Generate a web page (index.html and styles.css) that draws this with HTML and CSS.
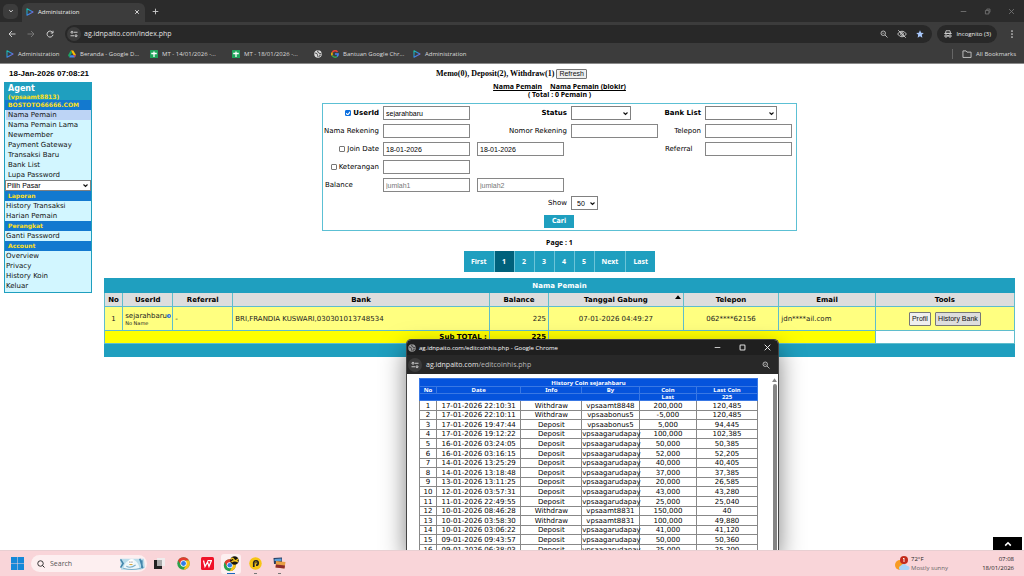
FILE: index.html
```html
<!DOCTYPE html>
<html lang="id">
<head>
<meta charset="utf-8">
<title>Administration</title>
<link rel="stylesheet" href="styles.css">
</head>
<body>
<svg class="defs" aria-hidden="true">
  <linearGradient id="playgrad" x1="0" y1="0" x2="1" y2="1"><stop offset="0" stop-color="#18c8a8"/><stop offset=".45" stop-color="#2a8be0"/><stop offset="1" stop-color="#b05ad8"/></linearGradient>
  <symbol id="play" viewBox="0 0 16 16"><path d="M2 14.500V1.500L14 8Z" fill="none" stroke="url(#playgrad)" stroke-width="2.200" stroke-linejoin="round"/></symbol>
  <symbol id="sheet" viewBox="0 0 16 16"><rect width="16" height="16" rx="1" fill="#1fa45b"/><path d="M8 3v11M2.500 7h11" stroke="#fff" stroke-width="2.600"/></symbol>
  <symbol id="tune" viewBox="0 0 16 16"><g fill="none" stroke="currentColor" stroke-width="1.800"><circle cx="4" cy="4.500" r="2"/><path d="M8 4.500h7M1 11.500h7"/><circle cx="12" cy="11.500" r="2"/></g></symbol>
  <symbol id="globe" viewBox="0 0 16 16"><circle cx="8" cy="8" r="7.500" fill="currentColor"/><path d="M2 6l4 1 1 3 1 4M8 1l-1 3 3 1 1 3 4-2M10 14l1-3 3-1" fill="none" stroke="#333" stroke-width="1.600"/></symbol>
  <symbol id="glass" viewBox="0 0 16 16"><g fill="none" stroke="currentColor" stroke-width="1.700"><circle cx="6.500" cy="6.500" r="4.500"/><path d="M10 10l5 5"/><path d="M4.500 6.500h4" stroke-width="1.300"/></g></symbol>
  <symbol id="chrome" viewBox="0 0 24 24"><circle cx="12" cy="12" r="11.500" fill="#2ba24c"/><path d="M12 .5A11.500 11.500 0 0 1 22 6.250H12L7 14.500 2 6.250A11.500 11.500 0 0 1 12 .5Z" fill="#e33b2e"/><path d="M22 6.250A11.500 11.500 0 0 1 12 23.500L17 14.500 16.500 6.250Z" fill="#fbc116"/><circle cx="12" cy="12" r="5.800" fill="#fff"/><circle cx="12" cy="12" r="4.500" fill="#2f7de9"/></symbol>
</svg>

<header class="browser">
  <div class="tabs">
    <button class="tab-search" aria-label="Cari tab"><svg viewBox="0 0 10 10"><path d="M2 3.500l3 3 3-3" fill="none" stroke="#ddd" stroke-width="1.600"/></svg></button>
    <div class="tab"><svg class="i8"><use href="#play"/></svg><span>Administration</span><button aria-label="Tutup tab"><svg viewBox="0 0 10 10"><path d="M2 2l6 6M8 2l-6 6" stroke="#ddd" stroke-width="1.600"/></svg></button></div>
    <button class="new-tab" aria-label="Tab baru"><svg viewBox="0 0 10 10"><path d="M5 1v8M1 5h8" stroke="#ccc" stroke-width="1.300"/></svg></button>
    <div class="window-controls">
      <button aria-label="Minimalkan"><svg viewBox="0 0 10 10"><path d="M1 5h8" stroke="#777" stroke-width="1.200"/></svg></button>
      <button aria-label="Pulihkan"><svg viewBox="0 0 10 10"><path d="M2 3.500h5v5H2zM4 3V1.500h4.500V6H7" fill="none" stroke="#777" stroke-width="1.200"/></svg></button>
      <button aria-label="Tutup"><svg viewBox="0 0 10 10"><path d="M1.500 1.500l7 7M8.500 1.500l-7 7" stroke="#777" stroke-width="1.200"/></svg></button>
    </div>
  </div>
  <div class="toolbar">
    <button aria-label="Kembali"><svg class="i8" viewBox="0 0 16 16"><path d="M15 8H2M8 2L2 8l6 6" fill="none" stroke="#d8d8d8" stroke-width="1.800"/></svg></button>
    <button aria-label="Maju"><svg class="i8" viewBox="0 0 16 16"><path d="M1 8h13M8 2l6 6-6 6" fill="none" stroke="#7c7c7c" stroke-width="1.800"/></svg></button>
    <button aria-label="Muat ulang"><svg class="i8" viewBox="0 0 16 16"><path d="M13.500 5.500A6 6 0 1 0 14 9.500M14 1.500V6H9.500" fill="none" stroke="#d8d8d8" stroke-width="1.900"/></svg></button>
    <div class="address">
      <span class="site-info"><svg class="i8"><use href="#tune"/></svg></span>
      <input class="url" aria-label="Alamat" value="ag.idnpaito.com/index.php">
      <svg class="i8"><use href="#glass"/></svg>
      <svg class="i10" viewBox="0 0 16 16"><g fill="none" stroke="#ccc" stroke-width="1.500"><path d="M1 8q3-4.500 7-4.500T15 8q-3 4.500-7 4.500T1 8Z"/><circle cx="8" cy="8" r="2.200"/><path d="M2 2l12 12"/></g></svg>
      <svg class="i8" viewBox="0 0 16 16"><path d="M8 .5l2.300 5 5.200.6-3.900 3.600 1.100 5.600L8 12.500l-4.700 2.800 1.100-5.600L.5 6.100l5.200-.6Z" fill="#a8c7fa"/></svg>
    </div>
    <button class="incognito"><svg class="i8" viewBox="0 0 16 16"><path d="M4 1.500h8l1 5H3ZM.5 7h15" fill="none" stroke="#ddd" stroke-width="1.600"/><g fill="none" stroke="#ddd" stroke-width="1.800"><circle cx="4" cy="12" r="2.400"/><circle cx="12" cy="12" r="2.400"/><path d="M6 11.500h4"/></g></svg>Incognito (3)</button>
    <button aria-label="Menu"><svg class="i8" viewBox="0 0 16 16" fill="#d8d8d8"><circle cx="8" cy="2" r="1.700"/><circle cx="8" cy="8" r="1.700"/><circle cx="8" cy="14" r="1.700"/></svg></button>
  </div>
  <nav class="bookmarks">
    <a href="#" class="bm-a"><svg class="i8"><use href="#play"/></svg>Administration</a>
    <a href="#" class="bm-b"><svg class="i8" viewBox="0 0 16 16"><path d="M5.500 1h5L16 10h-5Z" fill="#fbbc04"/><path d="M5.500 1L8 5.500 2.700 15 0 10.500Z" fill="#1ea362"/><path d="M5 10.500h11L13.300 15H2.700Z" fill="#4285f4"/><path d="M11 10.500h5L13.300 15Z" fill="#ea4335"/></svg>Beranda - Google D...</a>
    <a href="#" class="bm-c"><svg class="i8"><use href="#sheet"/></svg>MT - 14/01/2026 -...</a>
    <a href="#" class="bm-c"><svg class="i8"><use href="#sheet"/></svg>MT - 18/01/2026 -...</a>
    <a href="#" class="bm-d" aria-label="Situs"><svg class="i8"><use href="#globe"/></svg></a>
    <a href="#" class="bm-c"><svg class="i8" viewBox="0 0 16 16" fill="none" stroke-width="3"><path d="M13 4A6.300 6.300 0 0 0 2.500 5" stroke="#ea4335"/><path d="M2.500 5a6.300 6.300 0 0 0 0 6" stroke="#fbbc04"/><path d="M2.500 11a6.300 6.300 0 0 0 9.500 2" stroke="#34a853"/><path d="M12 13a6.300 6.300 0 0 0 2.300-5H8" stroke="#4285f4"/></svg>Bantuan Google Chr...</a>
    <a href="#"><svg class="i8"><use href="#play"/></svg>Administration</a>
    <a href="#" class="all"><svg class="i10" viewBox="0 0 16 16"><path d="M1.500 3h5l1.500 2h6.500v8.500h-13Z" fill="none" stroke="#ccc" stroke-width="1.400"/></svg>All Bookmarks</a>
  </nav>
</header>

<main class="page">
  <aside>
    <p class="clock">18-Jan-2026 07:08:21</p>
    <nav class="side">
      <div class="agent"><strong>Agent</strong><span>(vpsaamt8813)</span></div>
      <h2>BOSTOTO66666.COM</h2>
      <ul class="inset">
        <li class="current"><a href="#">Nama Pemain</a></li>
        <li><a href="#">Nama Pemain Lama</a></li>
        <li><a href="#">Newmember</a></li>
        <li><a href="#">Payment Gateway</a></li>
        <li><a href="#">Transaksi Baru</a></li>
        <li><a href="#">Bank List</a></li>
        <li><a href="#">Lupa Password</a></li>
      </ul>
      <select class="market" aria-label="Pilih Pasar"><option>Pilih Pasar</option></select>
      <h2>Laporan</h2>
      <ul><li><a href="#">History Transaksi</a></li><li><a href="#">Harian Pemain</a></li></ul>
      <h2>Perangkat</h2>
      <ul><li><a href="#">Ganti Password</a></li></ul>
      <h2>Account</h2>
      <ul><li><a href="#">Overview</a></li><li><a href="#">Privacy</a></li><li><a href="#">History Koin</a></li><li><a href="#">Keluar</a></li></ul>
    </nav>
  </aside>

  <section class="content">
    <div class="memo">Memo(0), Deposit(2), Withdraw(1) <button class="grey">Refresh</button></div>
    <div class="heads"><a href="#">Nama Pemain</a><a href="#">Nama Pemain (blokir)</a></div>
    <div class="total">( Total : 0 Pemain )</div>

    <form class="filter">
      <div class="lab bold"><input type="checkbox" id="cu" checked aria-label="Filter UserId"><label for="u">UserId</label></div>
      <input id="u" type="text" value="sejarahbaru">
      <label class="lab bold" for="st">Status</label>
      <select id="st" class="w-status"><option></option></select>
      <label class="lab bold" for="bl">Bank List</label>
      <select id="bl" class="w-bank"><option></option></select>

      <label class="lab" for="nr">Nama Rekening</label>
      <input id="nr" type="text">
      <label class="lab" for="no">Nomor Rekening</label>
      <input id="no" type="text">
      <label class="lab" for="te">Telepon</label>
      <input id="te" type="text">

      <div class="lab"><input type="checkbox" id="cj" aria-label="Filter Join Date"><label for="jd">Join Date</label></div>
      <input id="jd" type="text" value="18-01-2026">
      <input type="text" value="18-01-2026" aria-label="Sampai tanggal">
      <label class="lab start ref" for="re">Referral</label>
      <input id="re" type="text">

      <div class="lab"><input type="checkbox" id="ck" aria-label="Filter Keterangan"><label for="ke">Keterangan</label></div>
      <input id="ke" type="text">

      <label class="lab start first" for="j1">Balance</label>
      <input id="j1" type="text" placeholder="jumlah1">
      <input type="text" placeholder="jumlah2" aria-label="Balance sampai">

      <label class="lab third" for="sh">Show</label>
      <select id="sh" class="w-show"><option>50</option></select>
      <button class="search" type="button">Cari</button>
    </form>

    <p class="page-no">Page : 1</p>
    <nav class="pager"><a href="#">First</a><a href="#" class="on">1</a><a href="#">2</a><a href="#">3</a><a href="#">4</a><a href="#">5</a><a href="#">Next</a><a href="#">Last</a></nav>

    <table class="players">
      <colgroup><col class="p1"><col class="p2"><col class="p3"><col class="p4"><col class="p5"><col class="p6"><col class="p7"><col class="p8"><col class="p9"></colgroup>
      <thead>
        <tr class="title"><th colspan="9">Nama Pemain</th></tr>
        <tr class="cols"><th>No</th><th>UserId</th><th>Referral</th><th>Bank</th><th>Balance</th><th class="sorted">Tanggal Gabung<svg viewBox="0 0 8 6"><path d="M4 0l4 5H0Z"/></svg></th><th>Telepon</th><th>Email</th><th>Tools</th></tr>
      </thead>
      <tbody>
        <tr class="row"><td class="c">1</td><td><div class="user">sejarahbaru<svg viewBox="0 0 10 10"><circle cx="5" cy="5" r="5" fill="#2468d8"/><path d="M2.500 5h5M5.500 3l2 2-2 2" fill="none" stroke="#fff" stroke-width="1.300"/></svg></div><small>No Name</small></td><td>-</td><td>BRI,FRANDIA KUSWARI,030301013748534</td><td class="r">225</td><td class="c">07-01-2026 04:49:27</td><td class="c">062****62156</td><td>jdn****ail.com</td><td class="c"><button class="grey">Profil</button> <button class="grey dark">History Bank</button></td></tr>
        <tr class="sub"><td colspan="4" class="r">Sub TOTAL :</td><td class="r">225</td><td colspan="3"></td><td class="blank"></td></tr>
        <tr class="foot"><td colspan="9"></td></tr>
      </tbody>
    </table>
  </section>

  <section class="popup" aria-label="History Coin">
    <div class="pop-title"><svg class="i8"><use href="#globe"/></svg><span>ag.idnpaito.com/editcoinhis.php - Google Chrome</span>
      <div class="pop-controls">
        <button aria-label="Minimalkan"><svg viewBox="0 0 10 10"><path d="M1 5h8" stroke="#ccc" stroke-width="1.400"/></svg></button>
        <button aria-label="Maksimalkan"><svg viewBox="0 0 10 10"><rect x="1.500" y="1.500" width="7" height="7" rx="1" fill="none" stroke="#ddd" stroke-width="1.500"/></svg></button>
        <button aria-label="Tutup"><svg viewBox="0 0 10 10"><path d="M1 1l8 8M9 1L1 9" stroke="#eee" stroke-width="1.400"/></svg></button>
      </div>
    </div>
    <div class="pop-url"><span class="site-info"><svg class="i8"><use href="#tune"/></svg></span><span class="addr">ag.idnpaito.com<i>/editcoinhis.php</i></span><svg class="i8"><use href="#glass"/></svg></div>
    <div class="pop-body">
      <table class="coins">
        <colgroup><col class="h1"><col class="h2"><col class="h3"><col class="h4"><col class="h5"><col class="h6"></colgroup>
        <thead>
          <tr><th colspan="6">History Coin sejarahbaru</th></tr>
          <tr><th>No</th><th>Date</th><th>Info</th><th>By</th><th>Coin</th><th>Last Coin</th></tr>
          <tr><th colspan="4"></th><th>Last</th><th>225</th></tr>
        </thead>
        <tbody>
          <tr><td>1</td><td>17-01-2026 22:10:31</td><td>Withdraw</td><td>vpsaamt8848</td><td>200,000</td><td>120,485</td></tr>
          <tr><td>2</td><td>17-01-2026 22:10:11</td><td>Withdraw</td><td>vpsaabonus5</td><td>-5,000</td><td>120,485</td></tr>
          <tr><td>3</td><td>17-01-2026 19:47:44</td><td>Deposit</td><td>vpsaabonus5</td><td>5,000</td><td>94,445</td></tr>
          <tr><td>4</td><td>17-01-2026 19:12:22</td><td>Deposit</td><td>vpsaagarudapay</td><td>100,000</td><td>102,385</td></tr>
          <tr><td>5</td><td>16-01-2026 03:24:05</td><td>Deposit</td><td>vpsaagarudapay</td><td>50,000</td><td>50,385</td></tr>
          <tr><td>6</td><td>16-01-2026 03:16:15</td><td>Deposit</td><td>vpsaagarudapay</td><td>52,000</td><td>52,205</td></tr>
          <tr><td>7</td><td>14-01-2026 13:25:29</td><td>Deposit</td><td>vpsaagarudapay</td><td>40,000</td><td>40,405</td></tr>
          <tr><td>8</td><td>14-01-2026 13:18:48</td><td>Deposit</td><td>vpsaagarudapay</td><td>37,000</td><td>37,385</td></tr>
          <tr><td>9</td><td>13-01-2026 13:11:25</td><td>Deposit</td><td>vpsaagarudapay</td><td>20,000</td><td>26,585</td></tr>
          <tr><td>10</td><td>12-01-2026 03:57:31</td><td>Deposit</td><td>vpsaagarudapay</td><td>43,000</td><td>43,280</td></tr>
          <tr><td>11</td><td>11-01-2026 22:49:55</td><td>Deposit</td><td>vpsaagarudapay</td><td>25,000</td><td>25,040</td></tr>
          <tr><td>12</td><td>10-01-2026 08:46:28</td><td>Withdraw</td><td>vpsaamt8831</td><td>150,000</td><td>40</td></tr>
          <tr><td>13</td><td>10-01-2026 03:58:30</td><td>Withdraw</td><td>vpsaamt8831</td><td>100,000</td><td>49,880</td></tr>
          <tr><td>14</td><td>10-01-2026 03:06:22</td><td>Deposit</td><td>vpsaagarudapay</td><td>41,000</td><td>41,120</td></tr>
          <tr><td>15</td><td>09-01-2026 09:43:57</td><td>Deposit</td><td>vpsaagarudapay</td><td>50,000</td><td>50,360</td></tr>
          <tr><td>16</td><td>09-01-2026 06:38:03</td><td>Deposit</td><td>vpsaagarudapay</td><td>25,000</td><td>25,200</td></tr>
        </tbody>
      </table>
      <div class="scroll"><svg viewBox="0 0 8 6"><path d="M4 0l4 6H0Z" fill="#858585"/></svg><span></span></div>
    </div>
  </section>
  <button class="to-top" aria-label="Ke atas"><svg viewBox="0 0 10 10"><path d="M1.500 7L5 3.500 8.500 7" fill="none" stroke="#fff" stroke-width="2"/></svg></button>
</main>

<footer class="taskbar">
  <button aria-label="Start"><svg class="i13" viewBox="0 0 26 26"><path d="M0 0h12.500v12.500H0zM13.500 0H26v12.500H13.500zM0 13.500h12.500V26H0zM13.500 13.500H26V26H13.500z" fill="#1688d8"/></svg></button>
  <div class="find"><svg class="i8" viewBox="0 0 16 16"><circle cx="7" cy="7" r="5.500" fill="none" stroke="#222" stroke-width="1.800"/><path d="M11 11l4 4" stroke="#222" stroke-width="2"/></svg><input type="text" placeholder="Search" aria-label="Search">
    <svg class="bear" viewBox="0 0 52 26"><path d="M2 3h46l2 17-8 4H4Z" fill="#b9dcea"/><path d="M3 4l5 8-5 8M40 3l6 18M44 6v15" stroke="#4386ac" stroke-width="3" fill="none"/><path d="M8 22q3-14 13-16 5-6 9 0 8 5 10 17-15 4-32-1Z" fill="#eef7fa"/><circle cx="23" cy="9" r="5" fill="#fff"/><circle cx="21" cy="9" r="1" fill="#345"/><circle cx="25" cy="9" r="1" fill="#345"/><path d="M14 17q8 5 18-2M8 21q16 5 34 0" stroke="#7aaec9" stroke-width="2" fill="none"/><path d="M20 14h6" stroke="#e0a93c" stroke-width="2"/></svg></div>
  <div class="apps">
    <button aria-label="Tampilan tugas"><svg class="i13" viewBox="0 0 26 26"><path d="M2 6h16v18H2z" fill="#222"/><path d="M8 2h16v16H8z" fill="#eee" opacity=".9"/><path d="M8 6h10v12H8z" fill="#aaa"/></svg></button>
    <button aria-label="Chrome"><svg class="i13"><use href="#chrome"/></svg></button>
    <button aria-label="WPS"><svg class="i13" viewBox="0 0 26 26"><rect width="26" height="26" rx="3" fill="#f01228"/><path d="M5 7l3 12 5-9 3 9 5-12M13 7h9" fill="none" stroke="#fff" stroke-width="2.500"/></svg></button>
    <button class="active" aria-label="Chrome aktif"><svg class="i16" viewBox="0 0 32 32"><use href="#chrome" x="1" y="6" width="25" height="25"/><circle cx="23" cy="9" r="8.500" fill="#17150e"/><path d="M16 7q3-5 6 0t8-1M17 12q6-5 13 0" fill="none" stroke="#f2c21a" stroke-width="2.800"/></svg></button>
    <button class="open" aria-label="Potplayer"><svg class="i13" viewBox="0 0 26 26"><circle cx="13" cy="13" r="12.500" fill="#f6c514"/><path d="M9.500 20v-9a4.500 4.500 0 1 1 4.500 5.500" fill="none" stroke="#222" stroke-width="3.400"/><circle cx="14" cy="11.500" r="1.500" fill="#222"/></svg></button>
    <button class="open" aria-label="Foto"><svg class="i13" viewBox="0 0 26 26"><path d="M1 2l17-1v13H2z" fill="#283d61"/><path d="M3 4l14-1v5H3z" fill="#5b9fd8"/><path d="M6 8l19 2-2 13-18-2z" fill="#e8a044"/><path d="M6 15l18 2-1 6-18-2z" fill="#8d2c2c"/></svg></button>
  </div>
  <div class="weather"><svg class="i16" viewBox="0 0 32 32"><circle cx="12" cy="18" r="10" fill="#f79b23"/><path d="M12 28a5 5 0 0 1 2-9 7 7 0 0 1 12 1 4 4 0 0 1 2 8Z" fill="#a9d4f7"/><circle cx="20" cy="8" r="8" fill="#c42b1c"/><path d="M18 6l2-2v8" fill="none" stroke="#fff" stroke-width="1.800"/></svg><p>72°F<br><span>Mostly sunny</span></p></div>
  <p class="time">07:08<br>18/01/2026</p>
</footer>
</body>
</html>
```

FILE: styles.css
```css
* { box-sizing: border-box; }
body { margin: 0; height: 100vh; display: flex; flex-direction: column; overflow: hidden; background: #fff; color: #000; font: 7px/10px "DejaVu Sans", sans-serif; }
p, h2, ul { margin: 0; padding: 0; list-style: none; font-size: inherit; }
a { color: inherit; text-decoration: none; }
button { font: inherit; color: inherit; background: none; border: 0; padding: 0; margin: 0; }
input, select { font: 7px/9px "Liberation Sans", sans-serif; color: #000; margin: 0; }
svg { flex: none; display: block; }
.defs { position: absolute; width: 0; height: 0; }
.i8 { width: 8px; height: 8px; }
.i10 { width: 10px; height: 10px; }
.i13 { width: 13px; height: 13px; }
.i16 { width: 16px; height: 16px; }

/* browser chrome */
.browser { flex: none; background: #3c3c3c; color: #eee; font: 6px/10px "Open Sans", "Noto Sans", sans-serif; border-bottom: 1px solid #8a8a8a; }
.tabs { display: flex; align-items: center; height: 22px; background: #2b2b2b; padding-left: 3px; }
.tab-search { display: grid; place-items: center; width: 15px; height: 15px; border-radius: 5px; background: #3c3c3c; margin-right: 4px; }
.tab-search svg, .tab button svg { width: 6px; height: 6px; }
.tab { display: flex; align-items: center; gap: 4px; width: 123px; height: 19px; align-self: flex-end; padding: 0 5px 2px 4px; border-radius: 6px 6px 0 0; background: #3c3c3c; }
.tab button { margin-left: auto; }
.new-tab { margin-left: 7px; }
.new-tab svg { width: 7px; height: 7px; }
.window-controls { display: flex; gap: 17px; margin-left: auto; padding-right: 9px; }
.window-controls svg, .pop-controls svg { width: 7px; height: 7px; }
.toolbar { display: flex; align-items: center; gap: 11px; height: 23px; padding: 0 8px; }
.address { flex: 1; display: flex; align-items: center; gap: 9px; height: 18px; padding: 0 8px 0 2px; border-radius: 9px; background: #282828; color: #ccc; }
.site-info { display: grid; place-items: center; width: 14px; height: 14px; border-radius: 50%; background: #3c3c3c; color: #ddd; flex: none; }
.address .site-info { margin-right: -6px; }
.url { flex: 1; min-width: 0; border: 0; padding: 0; background: none; color: #e0e0e0; font: 7px/12px "Open Sans", "Noto Sans", sans-serif; }
.incognito { display: flex; align-items: center; gap: 4px; height: 18px; padding: 0 6px 0 7px; border-radius: 9px; background: #282828; margin-left: -6px; }
.bookmarks { display: flex; align-items: center; height: 18px; padding: 0 8px 1px 6px; color: #ddd; }
.bookmarks a { display: flex; align-items: center; gap: 4px; white-space: nowrap; }
.bm-a { width: 62px; }
.bm-b { width: 82px; }
.bookmarks .bm-c { width: 82px; }
.bm-d { width: 17px; }
.bookmarks .all { margin-left: auto; padding-left: 9px; border-left: 1px solid #666; }

/* page */
.page { position: relative; flex: 1; min-height: 0; overflow: hidden; display: flex; gap: 12px; padding: 4px 9px 0 4px; }
aside { flex: none; width: 88px; }
.clock { padding: 1px 0 0 5px; height: 14px; font: bold 8px/10px "Liberation Sans", sans-serif; white-space: nowrap; }
.side { border: 1px solid #1f9fbf; background: #d2f6ff; padding-bottom: 1px; }
.agent { display: flex; flex-direction: column; background: #1f9fbf; color: #fff; padding: 1px 3px 0; height: 17px; }
.agent strong { font-size: 8px; line-height: 9px; }
.agent span { color: #ffe01a; line-height: 7px; font-size: 6px; font-weight: bold; }
.side h2 { background: #1379cf; color: #ffe01a; font-size: 6px; font-weight: bold; line-height: 10px; padding-left: 3px; }
.inset { padding-left: 1px; }
.side li { height: 10px; white-space: nowrap; padding-left: 1px; }
.side .inset li { padding-left: 2px; }
.side li.current { background: #bdd4f5; }
.side a { color: #111; }
select { appearance: none; border: 1px solid #808080; border-radius: 0; padding: 0 9px 0 2px; background: #fff url("data:image/svg+xml,%3Csvg xmlns='http://www.w3.org/2000/svg' viewBox='0 0 10 10'%3E%3Cpath d='M1 3l4 4 4-4' fill='none' stroke='%23111' stroke-width='2.2'/%3E%3C/svg%3E") no-repeat right 2px center / 5px 5px; }
.market { display: block; width: 100%; height: 11px; line-height: 9px; padding-left: 1px; }

.content { flex: 1; min-width: 0; display: flex; flex-direction: column; align-items: center; }
.memo { display: flex; align-items: center; gap: 2px; height: 11px; margin-right: 96px; font: bold 8px/11px "Liberation Serif", serif; }
.grey { height: 10px; padding: 0 2px; border: 1px solid #777; border-radius: 1px; background: #efefef; color: #111; font: 7px/8px "Liberation Sans", sans-serif; }
.heads { display: flex; gap: 8px; margin-top: 3px; font: bold 7px/9px "Noto Sans", sans-serif; }
.heads a { text-decoration: underline; }
.total, .page-no { font: bold 7px/8px "Noto Sans", sans-serif; }

.filter { display: grid; grid-template-columns: 54px 90px 90px 90px 36px 88px; grid-auto-rows: 14px; gap: 4px; align-items: center; margin-top: 4px; padding: 2px 3px 2px 2px; border: 1px solid #5cc0d4; }
.filter input[type="text"] { width: 87px; height: 14px; padding: 0 2px; border: 1px solid #868686; border-radius: 0; }
.filter input::placeholder { color: #777; opacity: 1; }
.filter select { height: 14px; }
.lab { display: flex; align-items: center; justify-content: flex-end; gap: 2px; white-space: nowrap; }
.lab input { appearance: none; width: 6px; height: 6px; flex: none; border: 1px solid #777; border-radius: 1px; background: #fff; }
.lab input:checked { border-color: #0b6fe0; background: #0b6fe0 url("data:image/svg+xml,%3Csvg xmlns='http://www.w3.org/2000/svg' viewBox='0 0 10 10'%3E%3Cpath d='M1 5l3 3 5-6' fill='none' stroke='%23fff' stroke-width='2.2'/%3E%3C/svg%3E") center / 5px 5px no-repeat; }
.bold { font-weight: bold; }
.start { justify-content: flex-start; }
.first { grid-column: 1; }
.third { grid-column: 3; }
.ref { grid-column: 5; }
.w-status { width: 60px; }
.w-bank { width: 72px; }
.w-show { width: 27px; }
.filter .w-show { padding-left: 5px; }
.search { grid-column: 1 / -1; justify-self: center; height: 13px; width: 30px; background: #1f9fbf; color: #fff; font: bold 7px/13px "DejaVu Sans Condensed", sans-serif; }

.page-no { margin-top: 8px; }
.pager { display: flex; margin-top: 4px; background: #1f9fbf; color: #fff; font: bold 7px/21px "Noto Sans", sans-serif; }
.pager a { min-width: 20px; padding: 0 7px; text-align: center; border-right: 1px solid #6cc4d8; }
.pager a:last-child { border-right: 0; }
.pager .on { background: #00617b; }

.players { width: 100%; margin-top: 6px; table-layout: fixed; border-collapse: collapse; }
.players th, .players td { padding: 0 2px; border: 1px solid #5fbdcd; text-align: left; white-space: nowrap; }
.players th { text-align: center; }
.p1 { width: 2%; } .p2 { width: 5.500%; } .p3 { width: 6.600%; } .p4 { width: 28.200%; } .p5 { width: 6.500%; } .p6 { width: 14.800%; } .p7 { width: 10.500%; } .p8 { width: 10.600%; } .p9 { width: 15.300%; }
.players .title th { height: 14px; background: #1f9fbf; color: #fff; border-color: #1f9fbf; }
.cols th { height: 14px; background: #ddd; }
.cols .sorted { position: relative; }
.sorted svg { position: absolute; right: 2px; top: 2px; width: 6px; height: 5px; }
.row td { height: 24px; background: #ffff80; color: #222; line-height: 8px; }
.players .c { text-align: center; }
.players .r { text-align: right; }
.user { display: flex; align-items: center; }
.user svg { width: 4px; height: 4px; }
.row small { display: block; font-size: 5px; line-height: 6px; }
.row .grey { height: 14px; vertical-align: middle; }
.row .dark { background: #ddd; margin-left: 2px; }
.sub td { height: 13px; background: #ff0; font-weight: bold; }
.players .sub .blank { background: #fff; }
.players .foot td { height: 13px; background: #1f9fbf; border-color: #1f9fbf; }

/* history window */
.popup { position: absolute; left: 406px; top: 275px; bottom: 0; width: 373px; display: flex; flex-direction: column; border: 1px solid #444; border-bottom: 0; border-radius: 5px 5px 0 0; background: #fff; box-shadow: 0 10px 24px rgba(0, 0, 0, .5); }
.pop-title { flex: none; display: flex; align-items: center; gap: 4px; height: 15px; padding: 0 7px 0 1px; border-radius: 4px 4px 0 0; background: #1f1f1f; color: #fff; font: 6px/10px "Open Sans", "Noto Sans", sans-serif; }
.pop-title > svg { color: #999; }
.pop-title > span { margin-left: -1px; }
.pop-controls { display: flex; gap: 18px; margin-left: auto; }
.pop-url { flex: none; display: flex; align-items: center; gap: 4px; height: 19px; padding: 0 8px 0 1px; background: #282828; color: #ccc; font: 7px/12px "Open Sans", "Noto Sans", sans-serif; }
.addr { flex: 1; color: #e4e4e4; }
.addr i { font-style: normal; color: #b8b8b8; }
.pop-body { flex: 1; min-height: 0; display: flex; overflow: hidden; padding: 4px 0 0 12px; }
.coins { flex: 1; align-self: flex-start; table-layout: fixed; width: 340px; border-collapse: collapse; line-height: 8px; }
.coins th, .coins td { padding: 0; border: 1px solid #888; text-align: center; white-space: nowrap; }
.coins td { height: 10px; }
.coins tbody tr:nth-child(5n+2) td, .coins tbody tr:nth-child(5n+4) td { height: 9px; }
.coins th { height: 7px; line-height: 6px; background: #0553dc; color: #fff; border-color: #3978e4; font-family: "Noto Sans", sans-serif; font-size: 6px; }
.coins tr:first-child th { height: 8px; }
.h1 { width: 5%; } .h2 { width: 25%; } .h3 { width: 18%; } .h4 { width: 17%; } .h5 { width: 17%; } .h6 { width: 18%; }
.scroll { flex: none; display: flex; flex-direction: column; align-items: center; gap: 2px; width: 7px; margin-left: 13px; }
.scroll svg { width: 5px; height: 4px; }
.scroll span { flex: 1; width: 4px; border-radius: 2px 2px 0 0; background: #858585; }
.to-top { position: absolute; right: 2px; bottom: 0; display: grid; place-items: center; width: 29px; height: 13px; background: #000; }
.to-top svg { width: 8px; height: 8px; }

/* taskbar */
.taskbar { flex: none; display: flex; align-items: center; height: 26px; padding: 0 10px 0 11px; background: #f9d5d9; border-top: 1px solid #e8cfd2; font: 6px/9px "Open Sans", "Noto Sans", sans-serif; color: #222; }
.find { display: flex; align-items: center; gap: 5px; width: 116px; height: 17px; margin-left: 7px; padding: 0 1px 0 6px; border-radius: 9px; background: #fdeff0; }
.find input { flex: 1; min-width: 0; border: 0; padding: 0; background: none; font: 7px/10px "Open Sans", "Noto Sans", sans-serif; }
.find input::placeholder { color: #555; opacity: 1; }
.bear { width: 27px; height: 14px; }
.apps { display: flex; align-items: center; gap: 4px; margin-left: 2px; }
.apps button { display: grid; place-items: center; width: 20px; height: 20px; border-radius: 3px; }
.apps .active { background: #fdeff0 linear-gradient(#1668bd, #1668bd) no-repeat center bottom / 8px 1px; }
.apps .open { background: linear-gradient(#777, #777) no-repeat center bottom / 3px 1px; }
.weather { display: flex; align-items: center; gap: 1px; margin-left: auto; }
.weather span { color: #666; }
.time { width: 66px; text-align: right; }
```
